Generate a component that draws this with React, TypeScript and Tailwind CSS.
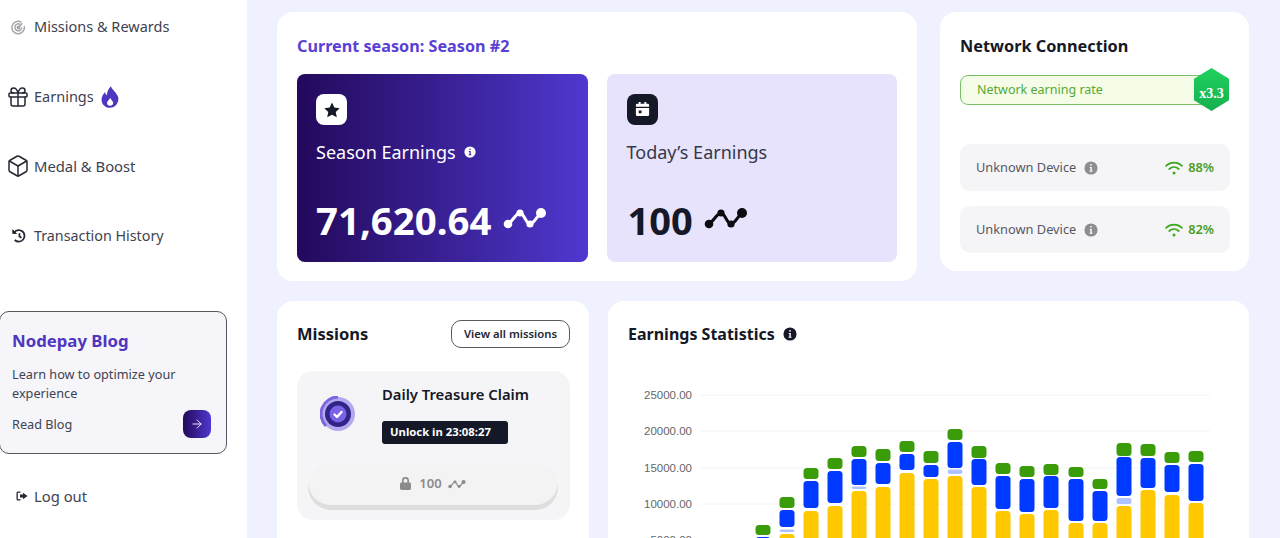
import { Gift, Box, ArrowRight } from "lucide-react";

const FONT = "font-['Noto_Sans','Open_Sans',sans-serif]";

function Nodes({ className }: { className?: string }) {
  return (
    <svg viewBox="0 0 44 24" className={className} fill="currentColor" stroke="currentColor">
      <path d="M5 18C9 16 13 7 17 7C21 7 23 18 27 18C31 18 34 10 38 7" fill="none" strokeWidth="3" />
      <circle cx="5" cy="18" r="4.300" stroke="none" />
      <circle cx="17" cy="7" r="3.600" stroke="none" />
      <circle cx="27" cy="18" r="3.600" stroke="none" />
      <circle cx="38" cy="7" r="5" stroke="none" />
    </svg>
  );
}

function Info({ className, ink = "#fff" }: { className?: string; ink?: string }) {
  return (
    <svg viewBox="0 0 16 16" className={className}>
      <circle cx="8" cy="8" r="7.500" fill="currentColor" />
      <rect x="7" y="3.400" width="2" height="2" rx="1" fill={ink} />
      <path d="M6.600 6.800h2.300v4.200h.8v1.300H6.400V11h.9V8.100h-.7z" fill={ink} />
    </svg>
  );
}

function WifiIcon({ className }: { className?: string }) {
  return (
    <svg viewBox="0 0 18 14" className={className} fill="none" stroke="currentColor" strokeWidth="1.700" strokeLinecap="round">
      <path d="M1 4.800C5.500 .6 12.500 .6 17 4.800" />
      <path d="M4.200 8C7 5.500 11 5.500 13.800 8" />
      <circle cx="9" cy="12" r="1.500" fill="currentColor" stroke="none" />
    </svg>
  );
}

const rows: [number, number, number, number, number, number?, number?, number?][] = [
  [763, 525, 535, 537, 560],
  [787, 497, 508, 510, 527, 529.5, 532, 534],
  [811, 468, 479, 481, 508, undefined, undefined, 511],
  [835, 458, 469, 471, 503, undefined, undefined, 506],
  [859, 446, 457, 459, 485, 486.5, 489, 491],
  [883, 449, 461, 463, 484, undefined, undefined, 487],
  [907, 441, 452, 454, 470, undefined, undefined, 473],
  [931, 451, 463, 465, 477, undefined, undefined, 479],
  [955, 429, 440, 442, 468, 469.5, 474, 476],
  [979, 446, 458, 459, 485, undefined, undefined, 487],
  [1003, 463, 474, 476, 509, undefined, undefined, 511],
  [1027, 466, 477, 479, 512, undefined, undefined, 514],
  [1051, 464, 475, 476, 508, undefined, undefined, 510],
  [1076, 467, 477, 479, 521, undefined, undefined, 523],
  [1100, 479, 489, 491, 521, undefined, undefined, 523],
  [1124, 443, 456, 457, 496, 498, 504, 506],
  [1148, 444, 456, 458, 488, undefined, undefined, 490],
  [1172, 452, 463, 465, 492, undefined, undefined, 495],
  [1196, 451, 462, 464, 501, undefined, undefined, 503],
];

function Chart() {
  const ox = 628;
  const oy = 370;
  const labels: [string, number][] = [["25000.00", 395], ["20000.00", 431], ["15000.00", 468], ["10000.00", 504], ["5000.00", 540]];
  return (
    <svg width="600" height="200" viewBox={`${ox} ${oy} 600 200`} className="block">
      {labels.map(([t, y]) => (
        <g key={t}>
          <line x1="700" x2="1210" y1={y} y2={y} stroke="#f4f4f6" />
          <text x="692" y={y + 4} textAnchor="end" fontSize="11.500" fill="#666" fontFamily="Liberation Sans, sans-serif">{t}</text>
        </g>
      ))}
      {rows.map(([x, g1, g2, b1, b2, l1, l2, y]) => (
        <g key={x}>
          <rect x={x - 7.500} y={g1} width="15" height={g2 - g1} rx="3.500" fill="#3b9c0a" />
          <rect x={x - 7.500} y={b1} width="15" height={b2 - b1} rx="3.500" fill="#0039ff" />
          {l1 !== undefined && <rect x={x - 7.500} y={l1} width="15" height={(l2 as number) - l1} rx="2.500" fill="#adc2ff" />}
          {y !== undefined && <rect x={x - 7.500} y={y} width="15" height={600 - y} rx="3.500" fill="#ffc800" />}
        </g>
      ))}
    </svg>
  );
}

function Device({ pct }: { pct: string }) {
  return (
    <div className="h-[47px] rounded-[10px] bg-[#f5f5f8] flex items-center pl-4 pr-4 text-[12.800px]">
      <span className="text-[#555862]">Unknown Device</span>
      <Info className="w-[14px] h-[14px] ml-[8px] text-[#8c8c92]" />
      <span className="ml-auto flex items-center gap-[5px] font-semibold text-[#4d9c1f]">
        <WifiIcon className="w-[18px] h-[14px] text-[#3fa71f]" />
        {pct}
      </span>
    </div>
  );
}

export default function App() {
  return (
    <div className={`${FONT} flex h-[538px] w-[1280px] overflow-hidden bg-[#f0f1fe] text-[#151826]`}>
      <aside className="w-[247px] shrink-0 bg-white flex flex-col pt-[16px] text-[#3f4250] text-[14.500px]">
        <div className="flex flex-col gap-[47.700px] pl-[9px]">
          <div className="flex items-center h-[22px]">
            <svg viewBox="0 0 18 18" className="w-[15px] h-[15px] ml-[2px] text-[#a3a3a8]" fill="none" stroke="currentColor" strokeWidth="1.700">
              <path d="M12.500 2.600A7.500 7.500 0 1 0 15.800 7" />
              <path d="M11 5.200A4.200 4.200 0 1 0 13 9" />
              <circle cx="9" cy="9" r="1.500" fill="currentColor" />
              <path d="M9 9l4.500-5" />
            </svg>
            <span className="ml-[8px]">Missions &amp; Rewards</span>
          </div>
          <div className="flex items-center h-[22px]">
            <Gift className="w-[24px] h-[24px] -ml-[3px] text-[#252733]" strokeWidth={1.500} />
            <span className="ml-[4px]">Earnings</span>
            <svg viewBox="0 0 20 24" className="w-[18px] h-[22px] ml-[7px] text-[#4f35bf]" fill="currentColor">
              <path d="M11 0c1 3.500 6.500 7 8 12 1.300 5-2 12-9 12S-.500 18 1 12.500C1.800 9.500 3.500 8 4.500 6.500c.3 2 1 3 2.200 3.500C6.500 6 8.500 2.500 11 0zm-.5 13c-1.500 2-3.800 3.500-3.800 6 0 1.800 1.500 2.800 3.300 2.800 1.900 0 3.500-1 3.500-3 0-2.300-2-3.300-3-5.800z" fillRule="evenodd" />
            </svg>
          </div>
          <div className="flex items-center h-[22px]">
            <Box className="w-[24px] h-[24px] -ml-[3px] text-[#252733]" strokeWidth={1.500} />
            <span className="ml-[4px] text-[14.800px]">Medal &amp; Boost</span>
          </div>
          <div className="flex items-center h-[22px]">
            <svg viewBox="0 0 18 18" className="w-[16px] h-[16px] ml-[2px] text-[#252733]" fill="none" stroke="currentColor" strokeWidth="2">
              <path d="M3.800 4.500A6.500 6.500 0 1 1 4.200 13.500" />
              <path d="M2 2v4.200h4.200z" fill="currentColor" strokeWidth="1" />
              <path d="M9.500 6v3.500l2.300 1.500" />
            </svg>
            <span className="ml-[7px] text-[14.300px]">Transaction History</span>
          </div>
        </div>

        <div className="mt-[64px] -ml-px w-[228px] h-[143px] shrink-0 rounded-[10px] border border-[#55565e] bg-[#f5f5fa] pl-[12px] pr-[15px] pt-[16px]">
          <div className="text-[16.800px] leading-[26px] font-bold text-[#4f35bf]">Nodepay Blog</div>
          <p className="mt-[11px] text-[12.700px] leading-[19px] text-[#3f4250]">Learn how to optimize your experience</p>
          <div className="flex items-center justify-between mt-[7px]">
            <span className="text-[12.700px] text-[#3f4250]">Read Blog</span>
            <span className="w-[28px] h-[28px] rounded-[8px] bg-gradient-to-r from-[#23095c] to-[#5038d0] flex items-center justify-center">
              <ArrowRight className="w-[14px] h-[14px] text-white" strokeWidth={1.500} />
            </span>
          </div>
        </div>

        <div className="mt-[31px] pl-[16px] flex items-center h-[22px]">
          <svg viewBox="0 0 12 12" className="w-[12px] h-[12px] text-[#252733]" fill="currentColor">
            <path d="M4.500 1.500H2A1.500 1.500 0 0 0 .5 3v6A1.500 1.500 0 0 0 2 10.500h2.500V9.200H2.200a.4.4 0 0 1-.4-.4V3.200c0-.2.2-.4.400-.4h2.300z" />
            <path d="M7 2.800 11.500 6 7 9.200V7.400H4V4.600h3z" />
          </svg>
          <span className="ml-[6px] text-[14.800px] text-[#3f4250]">Log out</span>
        </div>
      </aside>

      <main className="flex-1 pl-[30px] pt-[12px] flex flex-col gap-[20px] min-w-0">
        <div className="flex items-start gap-[23px]">
          <section className="w-[640px] h-[269px] shrink-0 rounded-[16px] bg-white px-[20px] pt-[22px]">
            <h2 className="text-[16.200px] leading-[24px] font-bold text-[#5a3fd6]">Current season: Season #2</h2>
            <div className="mt-[16px] flex gap-[19px]">
              <div className="w-[291px] h-[188px] rounded-[8px] bg-gradient-to-r from-[#23095c] to-[#5038d0] px-[19px] pt-[20px] text-white">
                <div className="w-[31px] h-[31px] rounded-[8px] bg-white flex items-center justify-center">
                  <svg viewBox="0 0 24 24" className="w-[18px] h-[18px] text-[#151826]" fill="currentColor">
                    <path d="M12 2l3.100 6.600 7.200.9-5.300 5 1.400 7.200L12 18.200l-6.400 3.500L7 14.500l-5.300-5 7.200-.9z" />
                  </svg>
                </div>
                <div className="mt-[13px] flex items-center text-[18px] leading-[28px]">
                  <span>Season Earnings</span>
                  <Info className="w-[12px] h-[12px] ml-[8px] text-white" ink="#3a2090" />
                </div>
                <div className="mt-[28px] flex items-center">
                  <span className="text-[38.400px] leading-[52px] font-bold">71,620.64</span>
                  <Nodes className="w-[44px] h-[24px] ml-[12px] -mt-[5px] text-white" />
                </div>
              </div>
              <div className="w-[291px] h-[188px] rounded-[8px] bg-[#e8e3fd] px-[20px] pt-[20px]">
                <div className="w-[31px] h-[31px] rounded-[8px] bg-[#151826] flex items-center justify-center">
                  <svg viewBox="0 0 18 18" className="w-[17px] h-[17px] text-white" fill="currentColor">
                    <path fillRule="evenodd" d="M5 1h2v2h4V1h2v2h1.500A1.500 1.500 0 0 1 16 4.500V6H2V4.500A1.500 1.500 0 0 1 3.500 3H5zM2 7.500h14v7A1.500 1.500 0 0 1 14.500 16h-11A1.500 1.500 0 0 1 2 14.500zM5 10v3h3v-3z" />
                  </svg>
                </div>
                <div className="mt-[13px] text-[18px] leading-[28px] text-[#353848]">Today’s Earnings</div>
                <div className="mt-[28px] ml-px flex items-center">
                  <span className="text-[38px] leading-[52px] font-bold">100</span>
                  <Nodes className="w-[44px] h-[24px] ml-[11px] -mt-[5px] text-[#0a0a0f]" />
                </div>
              </div>
            </div>
          </section>

          <section className="w-[309px] h-[259px] shrink-0 rounded-[16px] bg-white px-[20px] pt-[21px]">
            <h2 className="text-[16.300px] leading-[26px] font-bold">Network Connection</h2>
            <div className="relative mt-[16px] w-[265px] h-[30px] rounded-[8px] border border-[#78bf66] bg-[#f5fde9] pl-[16px] pt-px flex items-center text-[12.500px] text-[#55a832]">
              Network earning rate
              <div className="absolute -right-[5px] -top-[8px] w-[35px] h-[43px] [clip-path:polygon(50%_0,100%_25%,100%_75%,50%_100%,0_75%,0_25%)] bg-gradient-to-b from-[#20d160] to-[#17b04e] flex items-end justify-center pb-[7px] text-[14px] font-bold text-white font-['Liberation_Serif',serif]">x3.3</div>
            </div>
            <div className="mt-[39px] w-[270px] flex flex-col gap-[15px]">
              <Device pct="88%" />
              <Device pct="82%" />
            </div>
          </section>
        </div>

        <div className="flex items-start gap-[19px]">
          <section className="w-[312px] h-[300px] shrink-0 rounded-[16px] bg-white px-[20px] pt-[19px]">
            <div className="flex items-center justify-between -mr-px h-[28px]">
              <h2 className="text-[16.500px] font-bold">Missions</h2>
              <button className="w-[119px] h-[28px] rounded-[10px] border border-[#5a5b62] text-[11.300px] font-semibold text-[#252733]">View all missions</button>
            </div>
            <div className="mt-[23px] w-[273px] h-[149px] rounded-[16px] bg-[#f5f5f8] px-[11px] pt-[12px]">
              <div className="flex">
                <svg viewBox="0 0 36 36" className="w-[36px] h-[36px] ml-[12px] mt-[13px]">
                  <circle cx="18" cy="18" r="17" fill="#b5a8ef" />
                  <path d="M18 1A17 17 0 0 0 6 30" fill="none" stroke="#7b66de" strokeWidth="3" />
                  <circle cx="18" cy="18" r="13" fill="#2f2487" />
                  <circle cx="18" cy="18" r="8.500" fill="#7a63e6" />
                  <path d="M14.500 18.500l2.500 2.500 4.500-5" fill="none" stroke="#fff" strokeWidth="2.400" strokeLinecap="round" strokeLinejoin="round" />
                </svg>
                <div className="ml-[26px]">
                  <div className="text-[14.800px] leading-[22px] font-semibold">Daily Treasure Claim</div>
                  <div className="mt-[16px] w-[126px] h-[23px] rounded-[3px] bg-[#151826] text-white text-[11.300px] font-bold flex items-center pl-[8px]">Unlock in 23:08:27</div>
                </div>
              </div>
              <div className="mt-[20px] w-[250px] h-[46px] rounded-full bg-[#f3f3f3] shadow-[inset_0_-5px_0_#dedede] flex items-center justify-center gap-[6px] pb-[7px] text-[#8b8b8b] text-[13px] font-semibold">
                <svg viewBox="0 0 12 14" className="w-[11px] h-[13px]" fill="currentColor">
                  <path d="M6 0a3.800 3.800 0 0 0-3.800 3.800V6H1.500A1.500 1.500 0 0 0 0 7.500v5A1.500 1.500 0 0 0 1.500 14h9a1.500 1.500 0 0 0 1.500-1.500v-5A1.500 1.500 0 0 0 10.500 6h-.7V3.800A3.800 3.800 0 0 0 6 0zm0 1.800a2 2 0 0 1 2 2V6H4V3.800a2 2 0 0 1 2-2z" fillRule="evenodd" />
                </svg>
                <span className="ml-[2px]">100</span>
                <Nodes className="w-[18px] h-[10px]" />
              </div>
            </div>
          </section>

          <section className="w-[641px] h-[300px] shrink-0 rounded-[16px] bg-white px-[20px] pt-[19px]">
            <div className="flex items-center h-[28px]">
              <h2 className="text-[16px] font-bold">Earnings Statistics</h2>
              <Info className="w-[14px] h-[14px] ml-[8px] text-[#151826]" />
            </div>
            <div className="mt-[22px]">
              <Chart />
            </div>
          </section>
        </div>
      </main>
    </div>
  );
}
